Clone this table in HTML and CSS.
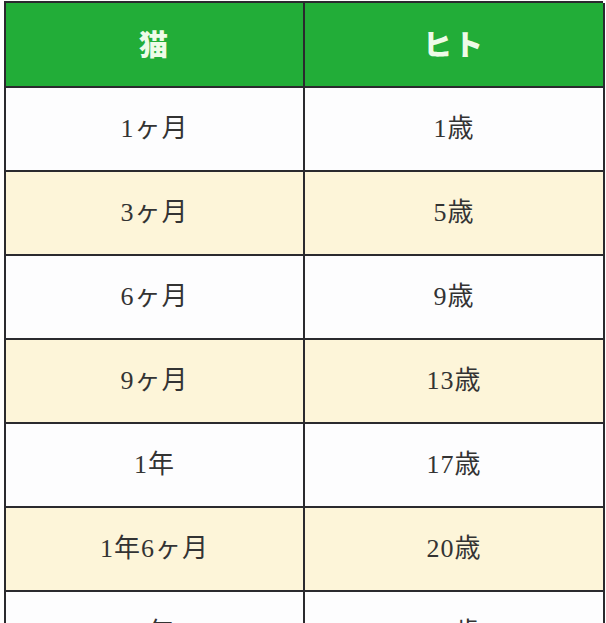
FILE: index.html
```html
<!DOCTYPE html>
<html lang="ja">
<head>
<meta charset="utf-8">
<title>猫とヒトの年齢</title>
<link rel="stylesheet" href="styles.css">
</head>
<body>
<div class="age-table">
  <div class="cell head">猫</div>
  <div class="cell head">ヒト</div>
  <div class="cell">1ヶ月</div>
  <div class="cell">1歳</div>
  <div class="cell alt">3ヶ月</div>
  <div class="cell alt">5歳</div>
  <div class="cell">6ヶ月</div>
  <div class="cell">9歳</div>
  <div class="cell alt">9ヶ月</div>
  <div class="cell alt">13歳</div>
  <div class="cell">1年</div>
  <div class="cell">17歳</div>
  <div class="cell alt">1年6ヶ月</div>
  <div class="cell alt">20歳</div>
  <div class="cell">2年</div>
  <div class="cell">24歳</div>
</div>
</body>
</html>
```

FILE: styles.css
```css
html, body {
  margin: 0;
  padding: 0;
  background: #ffffff;
  overflow: hidden;
}
body {
  padding: 1px 0 0 4px;
}
.age-table {
  width: 599px;
  display: grid;
  grid-template-columns: 299px 300px;
  grid-auto-rows: 84px;
  grid-template-rows: 85px;
  border-top: 2px solid #2a2a2e;
  border-left: 2px solid #2a2a2e;
  box-sizing: border-box;
}
.cell {
  border-right: 2px solid #2a2a2e;
  border-bottom: 2px solid #2a2a2e;
  background: #fdfdfe;
  display: flex;
  align-items: center;
  justify-content: center;
  padding-bottom: 7px;
  font-family: "Liberation Serif", "Noto Sans CJK JP", serif;
  font-size: 26px;
  color: #333333;
  letter-spacing: 1px;
}
.cell.alt {
  background: #fdf5d9;
}
.cell.head {
  background: #22ad38;
  color: #eefbe8;
  font-family: "Noto Sans CJK JP", sans-serif;
  font-weight: 900;
  font-size: 29px;
  letter-spacing: 2px;
  padding-bottom: 4px;
}
```
